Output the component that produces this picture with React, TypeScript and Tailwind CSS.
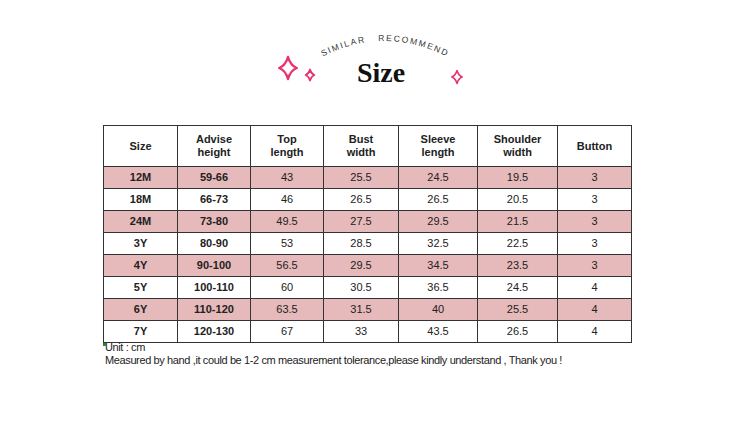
import React from "react";

const rows = [
  ["12M", "59-66", "43", "25.5", "24.5", "19.5", "3"],
  ["18M", "66-73", "46", "26.5", "26.5", "20.5", "3"],
  ["24M", "73-80", "49.5", "27.5", "29.5", "21.5", "3"],
  ["3Y", "80-90", "53", "28.5", "32.5", "22.5", "3"],
  ["4Y", "90-100", "56.5", "29.5", "34.5", "23.5", "3"],
  ["5Y", "100-110", "60", "30.5", "36.5", "24.5", "4"],
  ["6Y", "110-120", "63.5", "31.5", "40", "25.5", "4"],
  ["7Y", "120-130", "67", "33", "43.5", "26.5", "4"],
];

const widths = [74, 73, 73, 75, 79, 80, 74];

function Sparkle({ cx, cy, r, w }: { cx: number; cy: number; r: number; w: number }) {
  const k = r * 0.22;
  const d = `M${cx} ${cy - r} Q${cx + k} ${cy - k} ${cx + r * 0.8} ${cy} Q${cx + k} ${cy + k} ${cx} ${cy + r} Q${cx - k} ${cy + k} ${cx - r * 0.8} ${cy} Q${cx - k} ${cy - k} ${cx} ${cy - r}Z`;
  return <path d={d} fill="none" stroke="#e8336f" strokeWidth={w} strokeLinejoin="round" />;
}

export default function App() {
  return (
    <div className="w-[750px] h-[429px] bg-white flex flex-col" style={{ fontFamily: '"Liberation Sans", Arial, sans-serif' }}>
      {/* title block */}
      <div className="h-[125px] relative">
        <svg width="750" height="125" viewBox="0 0 750 125" className="absolute left-0 top-0">
          <defs>
            <path id="arc" d="M320 58 Q383 24 450 58" />
          </defs>
          <text fontSize="8.5" fill="#333" letterSpacing="1.7" fontFamily='"Liberation Sans", Arial, sans-serif'>
            <textPath href="#arc" startOffset="3" xmlSpace="preserve">SIMILAR   RECOMMEND</textPath>
          </text>
          <Sparkle cx={288} cy={68} r={11} w={2.4} />
          <Sparkle cx={310} cy={75} r={5.5} w={1.8} />
          <Sparkle cx={457} cy={77} r={6.5} w={1.6} />
          <text x="357" y="82" fontSize="28" fontWeight="bold" fill="#111" fontFamily='"Liberation Serif", "Times New Roman", serif'>
            Size
          </text>
        </svg>
      </div>

      <div className="ml-[103px] relative w-fit">
        <table className="border-collapse table-fixed text-[11px] text-[#222]">
          <colgroup>
            {widths.map((w, i) => (
              <col key={i} style={{ width: w }} />
            ))}
          </colgroup>
          <thead>
            <tr className="h-[41px]">
              {["Size", "Advise height", "Top length", "Bust width", "Sleeve length", "Shoulder width", "Button"].map((h) => (
                <th key={h} className="border border-[#333] font-bold leading-[13px] px-3 text-center">
                  {h}
                </th>
              ))}
            </tr>
          </thead>
          <tbody>
            {rows.map((r, i) => (
              <tr key={r[0]} className={`h-[22px] ${i % 2 === 0 ? "bg-[#e6b9ba]" : "bg-white"}`}>
                {r.map((c, j) => (
                  <td key={j} className={`border border-[#333] text-center leading-none ${j < 2 ? "font-bold" : ""}`}>
                    {c}
                  </td>
                ))}
              </tr>
            ))}
          </tbody>
        </table>
        <div className="absolute left-0 bottom-[-3px] w-[3px] h-[3px] bg-[#2c8a2c]" />
      </div>

      <div className="ml-[105px] mt-[-2px] text-[11px] leading-[13px] tracking-[-0.38px] text-[#222]">
        <div>Unit : cm</div>
        <div>Measured by hand ,it could be 1-2 cm measurement tolerance,please kindly understand , Thank you !</div>
      </div>
    </div>
  );
}
